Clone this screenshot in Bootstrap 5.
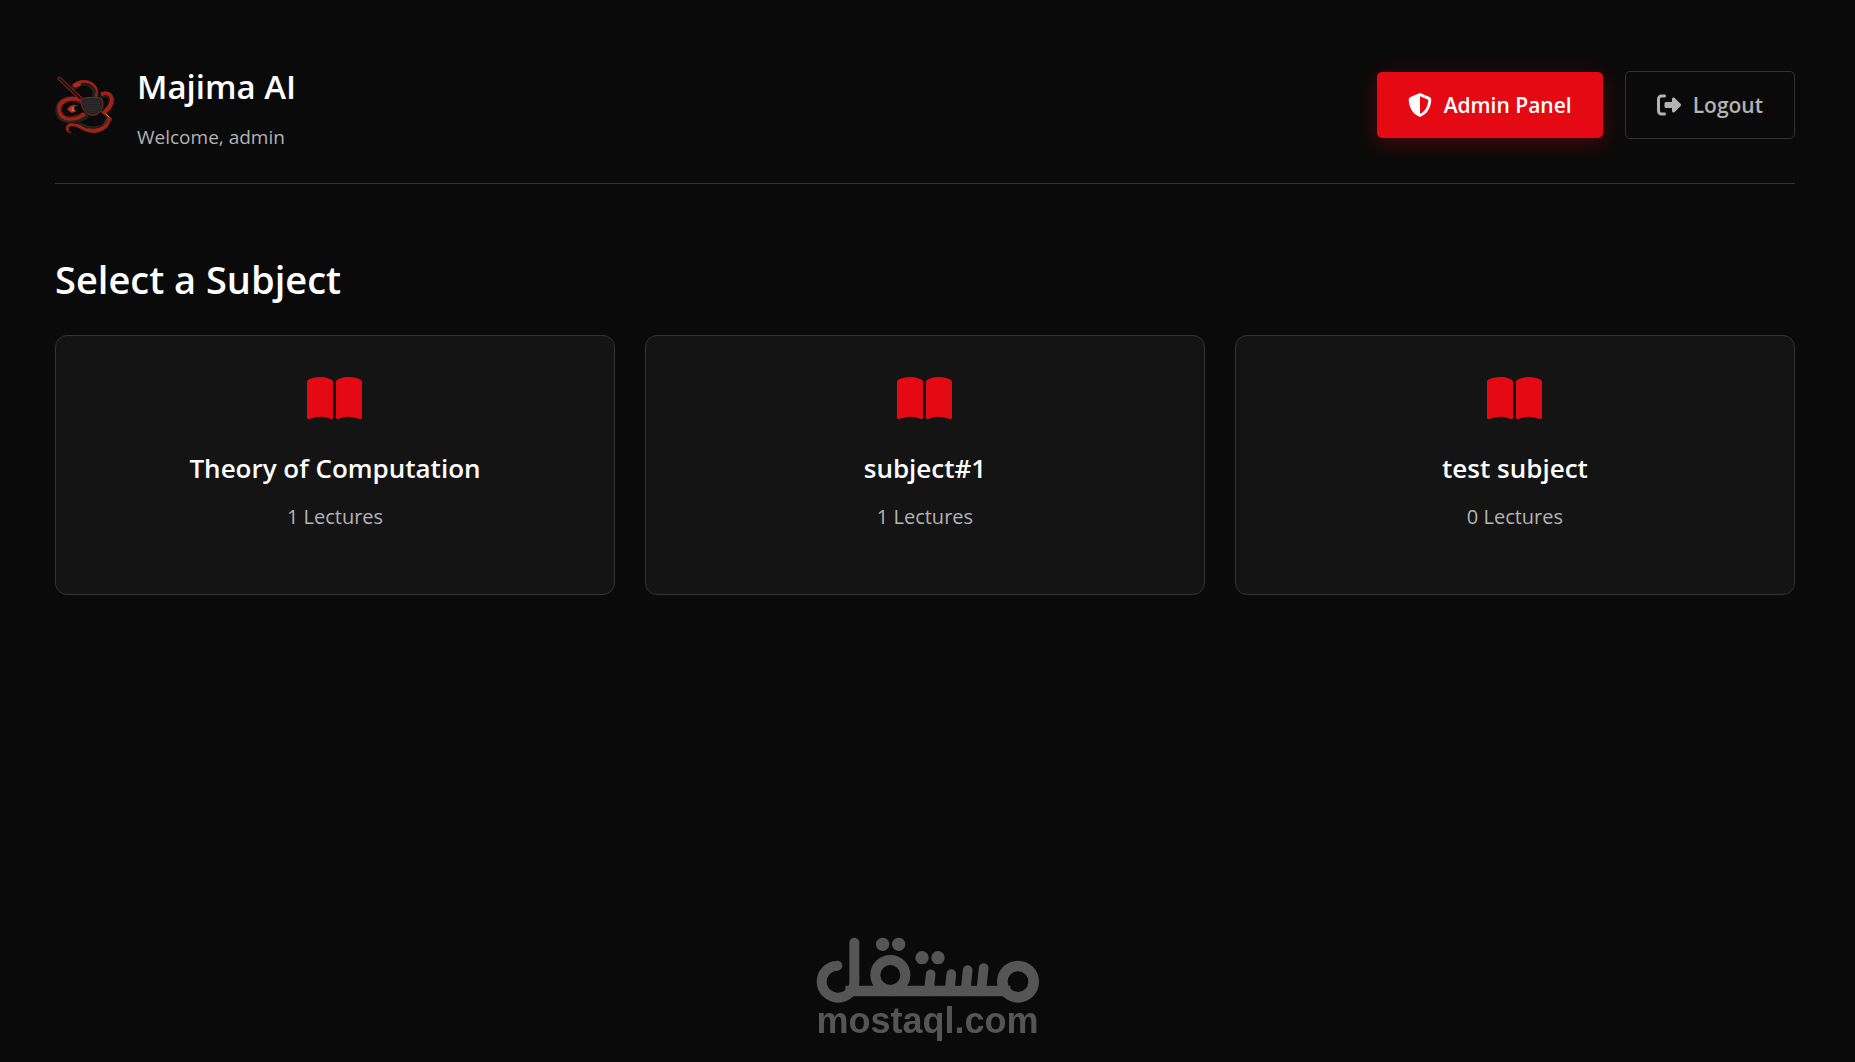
<!DOCTYPE html>
<html lang="en">
<head>
<meta charset="utf-8">
<meta name="viewport" content="width=device-width, initial-scale=1">
<title>Majima AI</title>
<link href="https://cdn.jsdelivr.net/npm/bootstrap@5.3.0/dist/css/bootstrap.min.css" rel="stylesheet">
<style>
  body { background: #0a0a0a; color: #fff; font-family: "Open Sans", "Noto Sans", sans-serif; min-height: 100vh; }
  .page-shell { padding: 57px 60px 60px 55px; }
  .top-bar { padding-bottom: 30px; border-bottom: 1px solid #333; }
  .brand-logo { width: 60px; height: 60px; flex: none; }
  .brand-block { gap: 22px; }
  .brand-title { font-size: 33px; line-height: 60px; font-weight: 600; }
  .brand-note { font-size: 19px; line-height: 32px; color: #b3b3b3; }
  .actions { gap: 22px; }
  .btn-top { display: inline-flex; align-items: center; gap: 12px; font-size: 21px; line-height: 34px; font-weight: 600; padding: 16px 31px; border: 0; border-radius: 5px; }
  .btn-top svg { width: 24px; height: 24px; fill: currentColor; }
  .btn-admin, .btn-admin:hover { background: #e50914; color: #fff; box-shadow: 0 5px 22px rgba(229, 9, 20, .3); }
  .btn-exit, .btn-exit:hover { border: 1px solid #333; color: #b3b3b3; }
  .section-title { font-size: 38px; line-height: 60px; font-weight: 600; margin: 65px 0 26px; }
  .subject-grid { --bs-gutter-x: 30px; --bs-gutter-y: 30px; }
  .subject-card { display: block; min-height: 260px; padding: 38px 30px; background: #141414; border: 1px solid #333; border-radius: 12px; color: #fff; text-decoration: none; text-align: center; }
  .subject-card svg { display: block; width: 55px; height: 49px; margin: 0 auto 24px; fill: #e50914; }
  .subject-card h3 { font-size: 26px; line-height: 42px; font-weight: 600; margin: 0 0 12px; }
  .subject-card p { font-size: 20px; line-height: 32px; color: #b3b3b3; margin: 0; }
  .site-stamp { position: fixed; left: 0; right: 0; bottom: 24px; color: #555; pointer-events: none; }
  .site-stamp svg { width: 226px; height: 68px; }
  .site-stamp span { font: bold 36px/34px "Liberation Sans", Arial, sans-serif; }
</style>
</head>
<body>
<div class="page-shell">
  <header class="top-bar d-flex justify-content-between align-items-center">
    <div class="brand-block d-flex align-items-center">
      <svg class="brand-logo" viewBox="45 45 180 180" fill="none" stroke-linecap="round" stroke-linejoin="round" aria-hidden="true">
        <g stroke="#1f1f1f" stroke-width="18">
          <path d="M104 80C124 58 172 66 166 112"/>
          <path d="M190 104C222 98 222 132 196 158"/>
          <path d="M126 124C80 106 48 126 56 160C66 188 104 186 136 170"/>
          <path d="M204 178C200 210 150 218 118 196"/>
        </g>
        <g stroke="#a32218" stroke-width="9">
          <path d="M102 76C124 54 176 64 169 106"/>
          <path d="M188 102C216 92 228 128 194 156" stroke-width="12"/>
          <path d="M124 122C84 108 50 126 60 156C66 182 104 180 130 164" stroke-width="13"/>
          <path d="M206 176C206 208 158 226 124 202C100 188 78 194 82 208"/>
          <path d="M202 184C196 208 170 216 148 210" stroke-width="12"/>
        </g>
        <g stroke="#301311" stroke-width="3">
          <path d="M110 76C130 62 170 70 168 104M192 106C212 102 214 126 192 146M122 127C88 116 60 130 64 154C72 176 104 176 122 162M202 180C200 202 156 212 128 198"/>
        </g>
        <path d="M82 208Q82 217 92 218" stroke="#a32218" stroke-width="4"/>
        <path d="M98 74L108 67L124 69L120 78L106 83Z" fill="#b52a1d" stroke="#7d1b14" stroke-width="2"/>
        <path d="M82 148Q94 128 116 138Q122 154 94 158Z" fill="#bd3021" stroke="#701a12" stroke-width="2"/>
        <path d="M94 149Q99 138 110 139L114 149Q104 156 96 153Z" fill="#c06a48"/>
        <ellipse cx="111" cy="145" rx="9" ry="8" fill="#080808"/>
        <path d="M58 55L122 116" stroke="#9c261b" stroke-width="11"/>
        <path d="M58 55L122 116" stroke="#1b1010" stroke-width="6"/>
        <path d="M122 118Q142 108 184 114Q194 132 184 152Q166 174 142 162Q122 146 122 118Z" fill="#252525" stroke="#8e2118" stroke-width="3"/>
        <path d="M132 124H176M130 131H182M134 138H182M137 145H178M144 152H170" stroke="#3c3c3c" stroke-width="2" stroke-dasharray="1 5"/>
        <path d="M186 156L213 176V181" stroke="#a32218" stroke-width="5"/>
        <path d="M198 162L207 171" stroke="#c99b60" stroke-width="3"/>
        <path d="M126 192Q150 206 178 198M54 172Q72 188 100 182" stroke="#555" stroke-width="1" stroke-dasharray="3 4"/>
      </svg>
      <div>
        <h1 class="brand-title mb-1">Majima AI</h1>
        <p class="brand-note mb-0">Welcome, admin</p>
      </div>
    </div>
    <div class="actions d-flex align-items-center">
      <button type="button" class="btn btn-top btn-admin">
        <svg viewBox="0 0 512 512" aria-hidden="true"><path d="M256 0c4.600 0 9.200 1 13.400 2.900L457.700 82.800c22 9.300 38.400 31 38.300 57.200c-.5 99.200-41.300 280.700-213.600 363.200c-16.700 8-36.100 8-52.800 0C57.300 420.700 16.500 239.200 16 140c-.1-26.200 16.300-47.900 38.300-57.200L242.700 2.900C246.800 1 251.400 0 256 0zm0 66.800V444.800C394 378 431.100 230.100 432 141.400L256 66.800z"/></svg>
        Admin Panel
      </button>
      <button type="button" class="btn btn-top btn-exit">
        <svg viewBox="0 0 512 512" aria-hidden="true"><path d="M377.900 105.900L500.700 228.700c7.200 7.200 11.300 17.100 11.300 27.300s-4.100 20.100-11.300 27.300L377.900 406.100c-6.400 6.400-15 9.900-24 9.900c-18.700 0-33.900-15.200-33.900-33.900l0-62.100-128 0c-17.700 0-32-14.300-32-32l0-64c0-17.700 14.300-32 32-32l128 0 0-62.100c0-18.700 15.200-33.900 33.900-33.900c9 0 17.600 3.600 24 9.900zM160 96L96 96c-17.700 0-32 14.300-32 32l0 256c0 17.700 14.300 32 32 32l64 0c17.700 0 32 14.300 32 32s-14.300 32-32 32l-64 0c-53 0-96-43-96-96L0 128C0 75 43 32 96 32l64 0c17.700 0 32 14.300 32 32s-14.300 32-32 32z"/></svg>
        Logout
      </button>
    </div>
  </header>

  <main>
    <h2 class="section-title">Select a Subject</h2>
    <svg class="d-none" aria-hidden="true">
      <symbol id="book-open" viewBox="0 0 576 512"><path d="M249.600 471.500c10.800 3.800 22.400-4.100 22.400-15.500V78.600c0-4.200-1.600-8.400-5-11C247.400 52 202.400 32 144 32C93.500 32 46.300 45.300 18.100 56.100C6.800 60.500 0 71.700 0 83.800V454.100c0 11.900 12.800 20.200 24.100 16.500C55.600 460.100 105.500 448 144 448c33.900 0 79 14 105.600 23.500zm76.800 0C353 462 398.100 448 432 448c38.500 0 88.400 12.100 119.900 22.600c11.300 3.800 24.100-4.600 24.100-16.500V83.800c0-12.100-6.800-23.300-18.100-27.600C529.700 45.300 482.500 32 432 32c-58.400 0-103.400 20-123 35.600c-3.300 2.600-5 6.800-5 11V456c0 11.400 11.700 19.300 22.400 15.500z"/></symbol>
    </svg>
    <div class="row row-cols-1 row-cols-md-3 subject-grid">
      <div class="col"><a href="#" class="subject-card"><svg aria-hidden="true"><use href="#book-open"/></svg><h3>Theory of Computation</h3><p>1 Lectures</p></a></div>
      <div class="col"><a href="#" class="subject-card"><svg aria-hidden="true"><use href="#book-open"/></svg><h3>subject#1</h3><p>1 Lectures</p></a></div>
      <div class="col"><a href="#" class="subject-card"><svg aria-hidden="true"><use href="#book-open"/></svg><h3>test subject</h3><p>0 Lectures</p></a></div>
    </div>
  </main>
</div>

<div class="site-stamp d-flex flex-column align-items-center">
  <svg viewBox="77 50 672 204" fill="none" stroke="currentColor" stroke-linecap="round" stroke-width="30" role="img" aria-label="مستقل">
    <path d="M141 139A49 48 0 1 0 192 187V70"/>
    <path d="M165 215H660" stroke-width="32" stroke-linecap="butt"/>
    <circle cx="300" cy="167" r="45"/>
    <circle cx="683" cy="187" r="47" stroke-width="32"/>
    <path d="M421 165L416 212M483 164L478 212M532 152L526 212M580 146L573 212" stroke-width="29"/>
    <g fill="currentColor" stroke="none"><circle cx="277" cy="75" r="20"/><circle cx="325" cy="75" r="20"/><circle cx="395" cy="115" r="20"/><circle cx="443" cy="115" r="20"/></g>
  </svg>
  <span>mostaql.com</span>
</div>
<script src="https://cdn.jsdelivr.net/npm/bootstrap@5.3.0/dist/js/bootstrap.bundle.min.js"></script>
</body>
</html>
